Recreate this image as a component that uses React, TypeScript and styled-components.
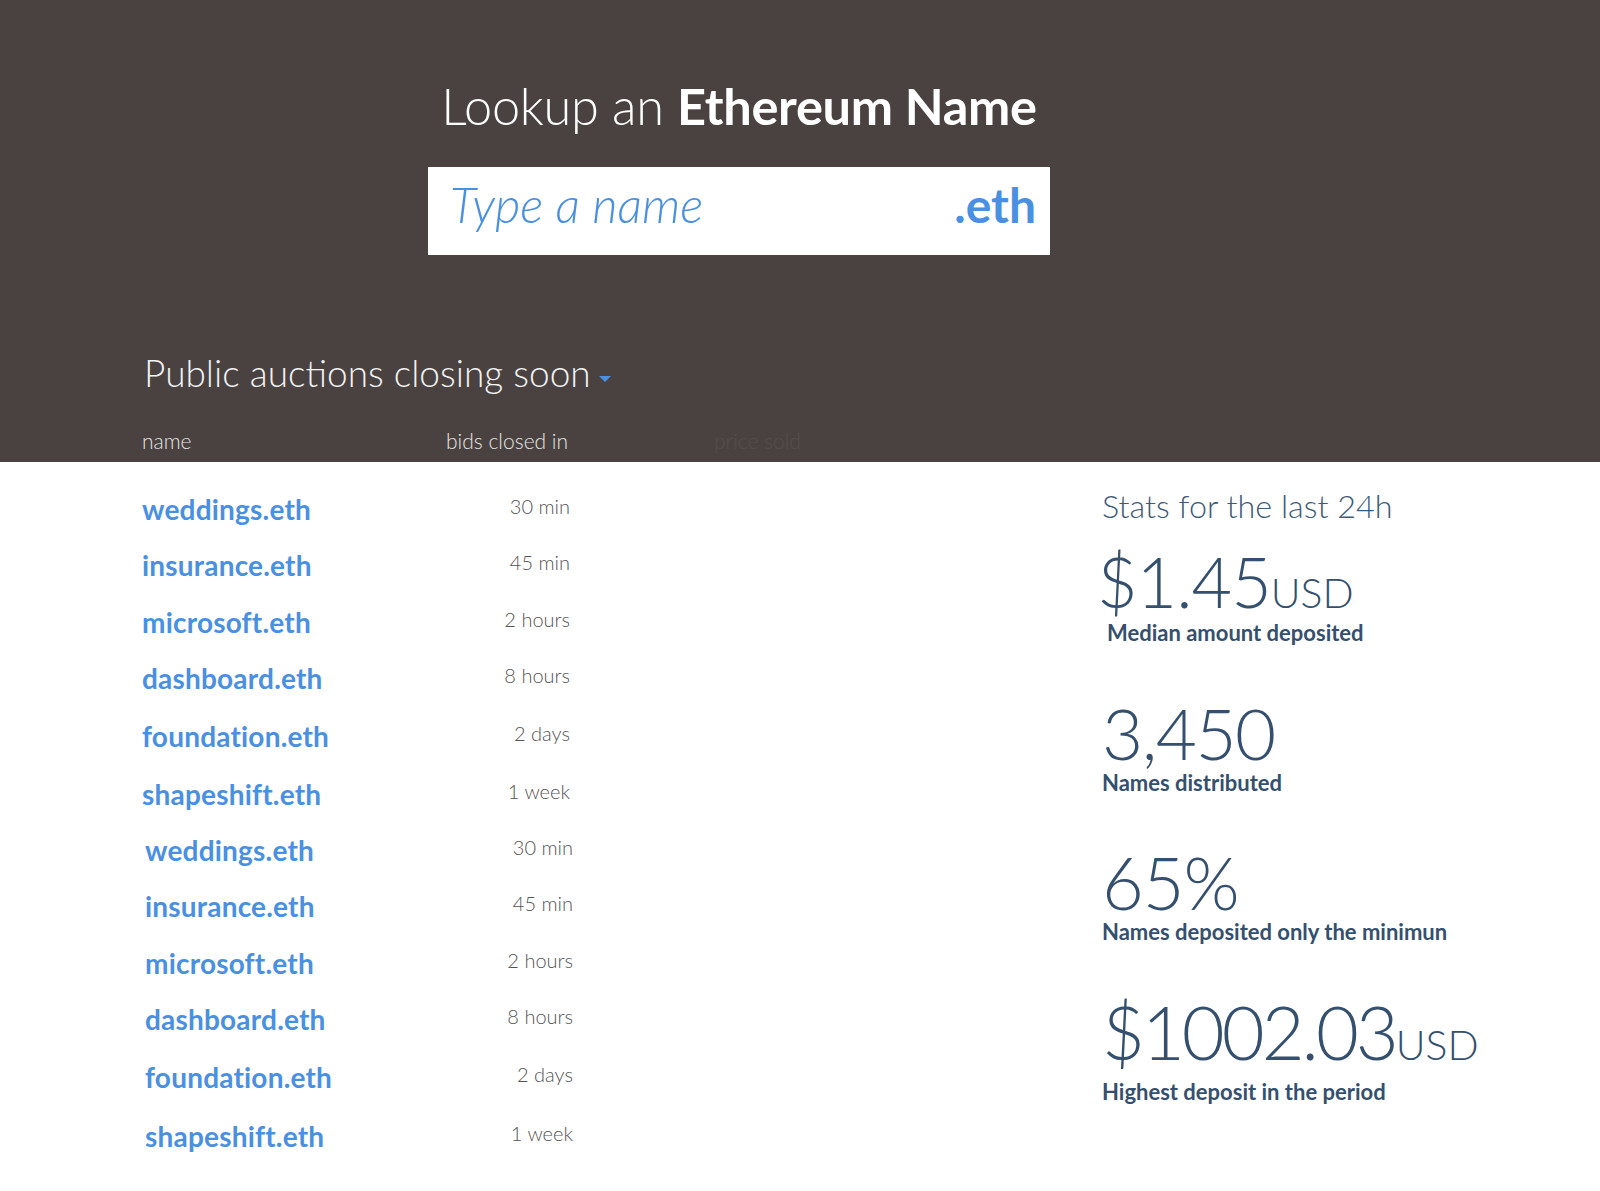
import React from "react";
import styled, { createGlobalStyle } from "styled-components";

const Global = createGlobalStyle`
  html, body { margin: 0; padding: 0; background: #ffffff; }
  body { font-family: Lato, "Open Sans", "Liberation Sans", sans-serif; }
  * { box-sizing: border-box; }
`;

const Page = styled.div`
  width: 1600px;
  min-height: 1191px;
  background: #ffffff;
`;

const Header = styled.header`
  background: #4a4241;
  height: 462px;
  padding-top: 70px;
  display: flex;
  flex-direction: column;
`;

const Hero = styled.div`
  width: 622px;
  margin-left: 428px;
  display: flex;
  flex-direction: column;
  align-items: center;
`;

const Title = styled.h1`
  margin: 0;
  font-size: 50.5px;
  line-height: 72px;
  font-weight: 300;
  color: #ffffff;
  letter-spacing: -0.3px;
  b { font-weight: 700; }
`;

const SearchBox = styled.div`
  margin-top: 25px;
  width: 622px;
  height: 88px;
  background: #ffffff;
  display: flex;
  align-items: center;
  justify-content: space-between;
  padding: 0 14px 14px 22px;
`;

const Placeholder = styled.span`
  font-size: 49px;
  font-style: italic;
  font-weight: 300;
  color: #4a90e2;
`;

const Tld = styled.span`
  font-size: 48px;
  font-weight: 700;
  color: #4a90e2;
`;

const AuctionsHead = styled.div`
  margin-top: 95px;
  padding-left: 144px;
  display: flex;
  align-items: center;
  gap: 8px;
`;

const AuctionsTitle = styled.h2`
  margin: 0;
  font-size: 37px;
  line-height: 46px;
  font-weight: 300;
  color: #f2f2f2;
`;

const Caret = styled.span`
  width: 0;
  height: 0;
  border-left: 6px solid transparent;
  border-right: 6px solid transparent;
  border-top: 6px solid #4a90e2;
  margin-top: 12px;
`;

const ColHeads = styled.div`
  margin-top: 33px;
  padding-left: 142px;
  display: grid;
  grid-template-columns: 304px 124px 144px 100px;
  font-size: 21px;
  font-weight: 300;
  line-height: 24px;
`;

const ColHead = styled.span<{ $faint?: boolean }>`
  color: ${(p) => (p.$faint ? "#564d4c" : "#e4e4e4")};
`;

const Body = styled.main`
  display: flex;
  padding-top: 18px;
`;

const Table = styled.div`
  width: 960px;
  padding-left: 142px;
  display: flex;
  flex-direction: column;
`;

const Row = styled.div<{ $shift: number; $h: number }>`
  display: grid;
  grid-template-columns: 240px 188px;
  align-items: center;
  height: ${(p) => p.$h}px;
  margin-left: ${(p) => p.$shift}px;
`;

const Name = styled.a`
  font-size: 28px;
  font-weight: 700;
  color: #4a90e2;
  text-decoration: none;
  letter-spacing: 0.2px;
`;

const When = styled.span`
  justify-self: end;
  font-size: 20px;
  font-weight: 300;
  color: #555555;
  margin-top: -6px;
`;

const Stats = styled.aside`
  padding-left: 142px;
  padding-top: 6px;
  display: flex;
  flex-direction: column;
  color: #34506e;
`;

const StatsTitle = styled.h3`
  margin: 0;
  font-size: 32.3px;
  line-height: 40px;
  font-weight: 300;
  color: #3d5a78;
`;

const Stat = styled.div<{ $gap: number }>`
  margin-top: ${(p) => p.$gap}px;
  display: flex;
  flex-direction: column;
`;

const Big = styled.div<{ $size: number; $ls: number; $shift?: number }>`
  font-size: ${(p) => p.$size}px;
  line-height: 70px;
  font-weight: 300;
  color: #34506e;
  letter-spacing: ${(p) => p.$ls}px;
  margin-left: ${(p) => p.$shift ?? 0}px;
`;

const Unit = styled.span`
  font-size: 41px;
  line-height: 1;
  letter-spacing: 0;
`;

const Label = styled.div<{ $indent?: number; $gap?: number }>`
  font-size: 22px;
  font-weight: 700;
  line-height: 26px;
  color: #34506e;
  margin-left: ${(p) => p.$indent ?? 0}px;
  margin-top: ${(p) => p.$gap ?? 0}px;
`;

const rows: [string, string][] = [
  ["weddings.eth", "30 min"],
  ["insurance.eth", "45 min"],
  ["microsoft.eth", "2 hours"],
  ["dashboard.eth", "8 hours"],
  ["foundation.eth", "2 days"],
  ["shapeshift.eth", "1 week"],
];

const heights = [57, 56, 57, 56, 60, 55, 57, 56, 57, 56, 60, 57];

export default function App() {
  const all = [...rows, ...rows];
  return (
    <Page>
      <Global />
      <Header>
        <Hero>
          <Title>
            Lookup an <b>Ethereum Name</b>
          </Title>
          <SearchBox>
            <Placeholder>Type a name</Placeholder>
            <Tld>.eth</Tld>
          </SearchBox>
        </Hero>
        <AuctionsHead>
          <AuctionsTitle>Public auctions closing soon</AuctionsTitle>
          <Caret />
        </AuctionsHead>
        <ColHeads>
          <ColHead>name</ColHead>
          <ColHead>bids closed in</ColHead>
          <span />
          <ColHead $faint>price sold</ColHead>
        </ColHeads>
      </Header>
      <Body>
        <Table>
          {all.map(([n, t], i) => (
            <Row key={i} $shift={i >= 6 ? 3 : 0} $h={heights[i]}>
              <Name href="#">{n}</Name>
              <When>{t}</When>
            </Row>
          ))}
        </Table>
        <Stats>
          <StatsTitle>Stats for the last 24h</StatsTitle>
          <Stat $gap={20}>
            <Big $size={70} $ls={-1} $shift={-5}>
              $1.45<Unit>USD</Unit>
            </Big>
            <Label $indent={5} $gap={4}>Median amount deposited</Label>
          </Stat>
          <Stat $gap={52}>
            <Big $size={71} $ls={-1.5}>3,450</Big>
            <Label $gap={2}>Names distributed</Label>
          </Stat>
          <Stat $gap={51}>
            <Big $size={72} $ls={-1}>65%</Big>
            <Label $gap={2}>Names deposited only the minimun</Label>
          </Stat>
          <Stat $gap={52}>
            <Big $size={74} $ls={-3}>
              $1002.03<Unit>USD</Unit>
            </Big>
            <Label $gap={12}>Highest deposit in the period</Label>
          </Stat>
        </Stats>
      </Body>
    </Page>
  );
}
